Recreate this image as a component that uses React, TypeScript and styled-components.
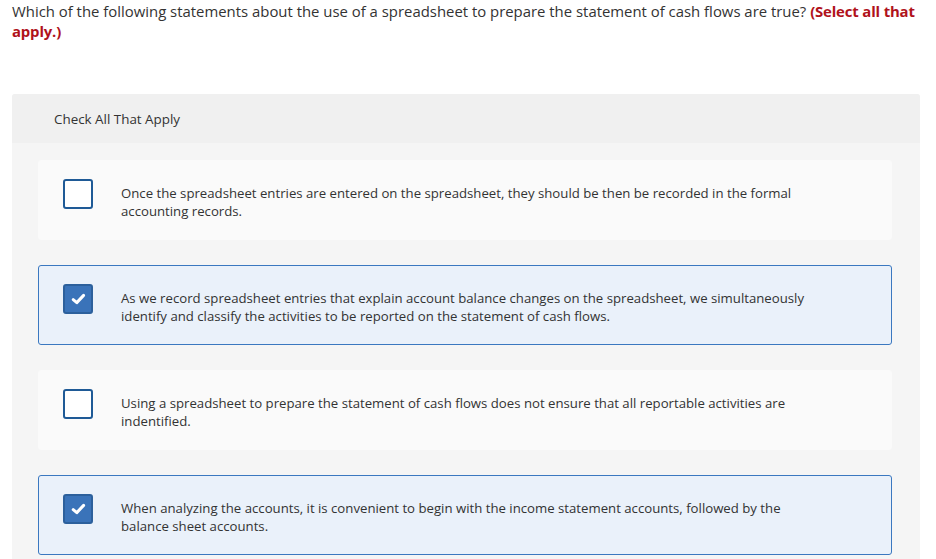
import React, { useState } from 'react';
import styled, { createGlobalStyle } from 'styled-components';

const GlobalStyle = createGlobalStyle`
  html, body {
    margin: 0;
    padding: 0;
    background: #ffffff;
  }
  body {
    font-family: 'Open Sans', 'Liberation Sans', sans-serif;
    color: #333333;
  }
`;

const Page = styled.div`
  width: 936px;
  padding: 1px 16px 0 12px;
  box-sizing: border-box;
`;

const Question = styled.p`
  margin: 0 -12px 0 0;
  font-size: 14.9px;
  line-height: 20px;
  color: #333333;
`;

const Hint = styled.span`
  color: #b0121b;
  font-weight: 700;
  letter-spacing: -0.15px;
`;

const Panel = styled.div`
  margin-top: 53px;
  background: #f5f5f5;
  border-radius: 3px 3px 0 0;
`;

const PanelHeader = styled.div`
  height: 49px;
  display: flex;
  align-items: center;
  padding-left: 42px;
  background: #f0f0f0;
  border-radius: 3px 3px 0 0;
  font-size: 13.4px;
  color: #333333;
`;

const OptionList = styled.div`
  display: flex;
  flex-direction: column;
  gap: 25px;
  padding: 17px 28px 4px 26px;
`;

const Option = styled.label<{ $checked: boolean }>`
  height: 80px;
  box-sizing: border-box;
  display: flex;
  align-items: flex-start;
  padding: 18px 0 0 24px;
  border-radius: 3px;
  cursor: pointer;
  background: ${p => (p.$checked ? '#eaf1fa' : '#fafafa')};
  border: 1px solid ${p => (p.$checked ? '#3b78c0' : '#fafafa')};
`;

const Box = styled.span<{ $checked: boolean }>`
  flex: none;
  width: 30px;
  height: 30px;
  box-sizing: border-box;
  border-radius: 3px;
  display: flex;
  align-items: center;
  justify-content: center;
  border: 2px solid ${p => (p.$checked ? '#2c609c' : '#1f5a96')};
  background: ${p => (p.$checked ? '#3a73b9' : '#ffffff')};
`;

const OptionText = styled.span`
  margin: 5px 0 0 28px;
  max-width: 690px;
  font-size: 13.2px;
  line-height: 18px;
  color: #333333;
`;

const options = [
  {
    text: 'Once the spreadsheet entries are entered on the spreadsheet, they should be then be recorded in the formal accounting records.',
    checked: false,
  },
  {
    text: 'As we record spreadsheet entries that explain account balance changes on the spreadsheet, we simultaneously identify and classify the activities to be reported on the statement of cash flows.',
    checked: true,
  },
  {
    text: 'Using a spreadsheet to prepare the statement of cash flows does not ensure that all reportable activities are indentified.',
    checked: false,
  },
  {
    text: 'When analyzing the accounts, it is convenient to begin with the income statement accounts, followed by the balance sheet accounts.',
    checked: true,
  },
];

const Check = () => (
  <svg width="15" height="12" viewBox="0 0 15 12">
    <path
      d="M2.2 6.6 L5.8 9.6 L12.6 2.4"
      fill="none"
      stroke="#ffffff"
      strokeWidth="3"
      strokeLinecap="round"
      strokeLinejoin="round"
    />
  </svg>
);

export default function App() {
  const [selected, setSelected] = useState(options.map(o => o.checked));

  return (
    <Page>
      <GlobalStyle />
      <Question>
        Which of the following statements about the use of a spreadsheet to prepare the statement of cash flows are
        true? <Hint>(Select all that apply.)</Hint>
      </Question>
      <Panel>
        <PanelHeader>Check All That Apply</PanelHeader>
        <OptionList>
          {options.map((obj, index) => (
            <Option
              key={index}
              $checked={selected[index]}
              onClick={() => {
                const next = [...selected];
                next[index] = !next[index];
                setSelected(next);
              }}
            >
              <Box $checked={selected[index]}>{selected[index] ? <Check /> : null}</Box>
              <OptionText>{obj.text}</OptionText>
            </Option>
          ))}
        </OptionList>
      </Panel>
    </Page>
  );
}
